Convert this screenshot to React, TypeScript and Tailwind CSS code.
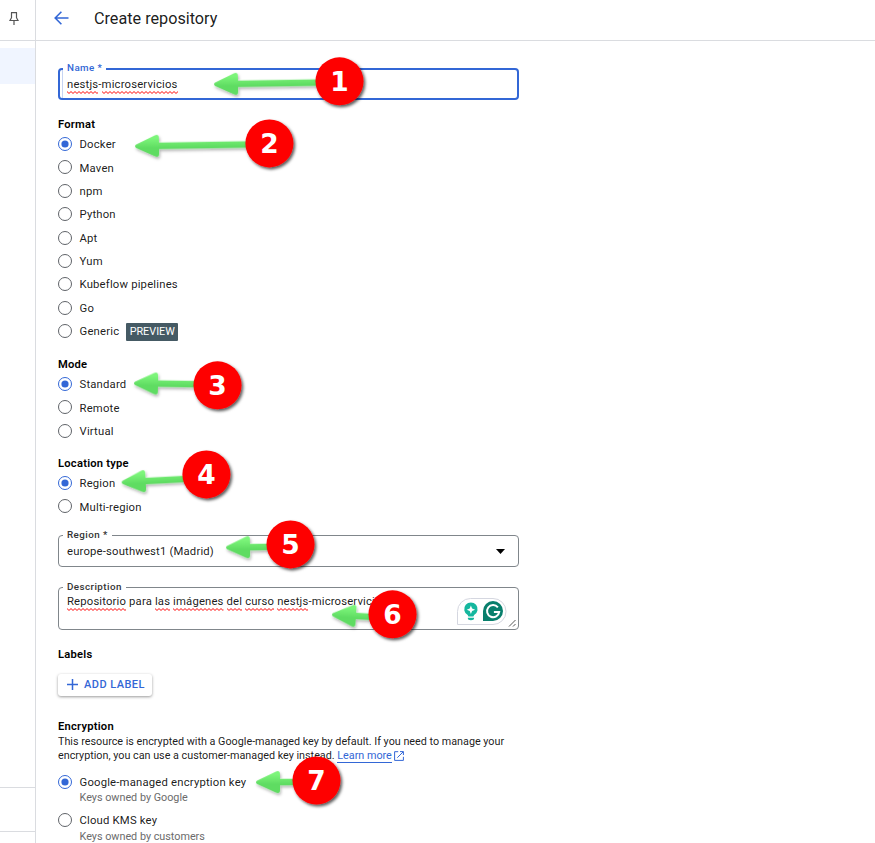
import React from "react";

type Marker = { n: number; x: number; y: number; tx: number; ty: number };

const markers: Marker[] = [
  { n: 1, x: 339.5, y: 81.3, tx: 214, ty: 84.2 },
  { n: 2, x: 269.4, y: 143.4, tx: 135, ty: 146.2 },
  { n: 3, x: 217.5, y: 385.3, tx: 134, ty: 383.2 },
  { n: 4, x: 206.4, y: 474.4, tx: 121.7, ty: 482.3 },
  { n: 5, x: 290.5, y: 544.4, tx: 226, ty: 547.5 },
  { n: 6, x: 392.5, y: 614.3, tx: 332, ty: 614.5 },
  { n: 7, x: 316.5, y: 780.5, tx: 256, ty: 782.2 },
];

// Direction of each arrow's shaft, in degrees
const angles = [-0.9, -0.9, 0.9, -3, -0.8, 3.5, -0.3];

function Radio({ on }: { on?: boolean }) {
  return (
    <svg className="h-[14px] w-[14px] shrink-0" viewBox="0 0 14 14">
      <circle cx="7" cy="7" r="6.5" fill="none" stroke={on ? "#3367d6" : "#5f6368"} strokeWidth="1" />
      {on && <circle cx="7" cy="7" r="3.6" fill="#3367d6" />}
    </svg>
  );
}

function Option({ label, on, badge }: { label: string; on?: boolean; badge?: string }) {
  return (
    <div className="flex h-[23.4px] items-center">
      <Radio on={on} />
      <span className="ml-[7.5px] pt-[1.1px] leading-[17px] tracking-[0.19px] whitespace-nowrap">{label}</span>
      {badge && (
        <span className="mt-[1px] ml-[7px] flex h-[18px] w-[52px] items-center justify-center rounded-[1px] bg-[#455a64] text-[10.8px] tracking-normal text-white">
          {badge}
        </span>
      )}
    </div>
  );
}

function Group({ title, className, children }: { title: string; className: string; children?: React.ReactNode }) {
  return (
    <section className={className}>
      <h2 className="h-[15.4px] text-[11.2px] leading-[15px] font-semibold tracking-[0.23px] text-black">{title}</h2>
      {children}
    </section>
  );
}

function Field({ label, className, labelClass, children }: { label: string; className: string; labelClass: string; children: React.ReactNode }) {
  return (
    <div className={`relative w-[461px] rounded-[4px] ${className}`}>
      <span className={`absolute h-[12px] bg-white px-[4px] text-[9.8px] leading-[12px] font-medium tracking-[0.43px] whitespace-nowrap ${labelClass}`}>
        {label}
      </span>
      {children}
    </div>
  );
}

// A word with the spell checker's wavy line under it
function Sp({ children }: { children: string }) {
  return (
    <span className="relative inline-block leading-[14px]">
      {children}
      <svg className="absolute -bottom-[2px] left-0 h-[3px] w-full">
        <rect width="100%" height="3" fill="url(#wave)" />
      </svg>
    </span>
  );
}

export default function App() {
  return (
    <div className="relative flex h-[843px] w-[875px] overflow-hidden bg-white font-[Roboto,sans-serif] text-[11.3px] tracking-[0.17px] text-[#1a1a1a]">
      <aside className="flex w-[36px] shrink-0 flex-col border-r border-[#dadce0]">
        <div className="flex h-[41px] items-start border-b border-[#dadce0] pt-[11px] pl-[7px]">
          <svg className="h-[15px] w-[14px]" viewBox="0 0 14 15" fill="none" stroke="#555" strokeWidth="1.2">
            <path d="M4 1.600h6M4.500 1.500v5.200L3 9.500h8L9.500 6.700V1.500M7 9.600V14" />
          </svg>
        </div>
        <div className="mt-[7px] h-[36px] bg-[#f0f5ff]" />
        <div className="mt-auto h-[56px] border-t border-[#dadce0]">
          <div className="h-[44px] border-b border-[#dadce0]" />
        </div>
      </aside>

      <main className="min-w-0 flex-1 text-black/90">
        <header className="flex h-[41px] items-center border-b border-[#dadce0] pb-[4px] pl-[18px]">
          <svg className="h-[14px] w-[15px]" viewBox="0 0 15 14" fill="none" stroke="#3367d6" strokeWidth="1.6">
            <path d="M14.500 7H1.600M7.400 0.700L1.200 7l6.200 6.300" />
          </svg>
          <h1 className="mt-[2px] ml-[25px] text-[16.2px] leading-[20px] tracking-normal">Create repository</h1>
        </header>

        <div className="pt-[27px] pl-[22px]">
          <Field label="Name *" className="h-[32px] border-2 border-[#3367d6]" labelClass="left-[3px] -top-[8px] text-[#3367d6]">
            <div className="ml-[2px] h-[28px] border-l border-[#c6d4f3] pl-[4px] leading-[29px]">
              <Sp>nestjs</Sp>-<Sp>microservicios</Sp>
            </div>
          </Field>

          <Group title="Format" className="h-[240px] pt-[17px]">
            <Option label="Docker" on />
            <Option label="Maven" />
            <Option label="npm" />
            <Option label="Python" />
            <Option label="Apt" />
            <Option label="Yum" />
            <Option label="Kubeflow pipelines" />
            <Option label="Go" />
            <Option label="Generic" badge="PREVIEW" />
          </Group>

          <Group title="Mode" className="h-[99px] pt-[17px]">
            <Option label="Standard" on />
            <Option label="Remote" />
            <Option label="Virtual" />
          </Group>

          <Group title="Location type" className="h-[96px] pt-[17px]">
            <Option label="Region" on />
            <Option label="Multi-region" />
          </Group>

          <Field label="Region *" className="h-[32px] border border-[#80868b]" labelClass="left-[4px] -top-[7px] text-[#333]">
            <div className="flex h-[30px] items-center justify-between pr-[13px] pl-[8px]">
              <span className="pt-[2px]">europe-southwest1 (Madrid)</span>
              <svg className="h-[5px] w-[9px]" viewBox="0 0 9 5">
                <path d="M0 0h9L4.500 5z" fill="#000" />
              </svg>
            </div>
          </Field>

          <Field label="Description" className="mt-[20px] h-[43px] border border-[#80868b]" labelClass="left-[4px] -top-[7px] text-[#333]">
            <div className="flex justify-between">
              <p className="pt-[6px] pl-[8px] leading-[16px] tracking-[0.16px] whitespace-nowrap">
                <Sp>Repositorio</Sp> para <Sp>las</Sp> <Sp>imágenes</Sp> <Sp>del</Sp> <Sp>curso</Sp> <Sp>nestjs</Sp>-microservicios
              </p>
              <svg className="h-[41px] w-[63px] shrink-0" viewBox="455 588 63 41">
                <path d="M457.500 624.500V611.500a13 13 0 0 1 13-13h22.500a13 13 0 0 1 0 26z" fill="#fff" stroke="#d5d7e0" />
                <path d="M467.700 615a6.700 6.700 0 1 1 6.400 0l-.7 1.500h-5z" fill="#15b79e" />
                <path d="M467.800 617.800h6.300v.3a3.150 2.200 0 0 1-6.300 0z" fill="#15b79e" />
                <path d="M470.900 605.500l1.200 3 3 1.200-3 1.200-1.200 3-1.200-3-3-1.200 3-1.200z" fill="#fff" />
                <path d="M483 621V611a10 10 0 1 1 10 10z" fill="#087f6c" />
                <path d="M497.900 607.300a6.100 6.100 0 1 0 1.300 4.600h-5.300" fill="none" stroke="#fff" strokeWidth="2" />
                <path d="M509 626.500l6.500-6.500M513 626.500l2.500-2.500" stroke="#444" strokeWidth=".9" />
              </svg>
            </div>
          </Field>

          <Group title="Labels" className="h-[66px] pt-[17px]">
            <button className="mt-[11.600px] flex h-[22px] w-[94px] items-center rounded-[3px] bg-white pl-[9px] font-medium text-[#3367d6] shadow-[0_1px_3px_rgba(0,0,0,0.4)]">
              <svg className="mb-[1px] h-[11px] w-[11px]" viewBox="0 0 11 11" stroke="#3367d6" strokeWidth="1.5">
                <path d="M5.500 0v11M0 5.500h11" />
              </svg>
              <span className="ml-[6px] text-[11px] tracking-[0.45px] whitespace-nowrap">ADD LABEL</span>
            </button>
          </Group>

          <Group title="Encryption" className="pt-[23px]">
            <p className="pt-[0.600px] text-[10.8px] leading-[14.400px] tracking-[-0.010px] whitespace-nowrap">
              This resource is encrypted with a Google-managed key by default. If you need to manage your
              <br />
              encryption, you can use a customer-managed key instead.{" "}
              <a className="border-b border-[#3367d6] text-[#3367d6]">Learn more</a>
              <svg className="ml-[2px] inline h-[10px] w-[10px] align-[-1.500px]" viewBox="0 0 10 10" fill="none" stroke="#3367d6">
                <path d="M4.200.7H.6v8.700h8.800V5.800M6 .6h3.400V4M9.200.8L3.300 6.700" />
              </svg>
            </p>
            <div className="mt-[6.700px]">
              <Option label="Google-managed encryption key" on />
              <p className="-mt-[3px] h-[14px] pl-[21.500px] text-[10.800px] leading-[14px] tracking-[0px] text-[#6b6b6b]">Keys owned by Google</p>
            </div>
            <div className="mt-[3.400px]">
              <Option label="Cloud KMS key" />
              <p className="-mt-[3px] h-[14px] pl-[21.500px] text-[10.800px] leading-[15px] tracking-[0px] text-[#6b6b6b]">Keys owned by customers</p>
            </div>
          </Group>
        </div>
      </main>

      {/* Numbered callouts lie over the form */}
      <svg className="pointer-events-none absolute inset-0 h-[843px] w-[875px]" viewBox="0 0 875 843">
        <defs>
          <pattern id="wave" width="4" height="3" patternUnits="userSpaceOnUse">
            <path d="M-1 1.500L0 .5L2 2.500L4 .5L5 1.500" fill="none" stroke="#f00" strokeWidth="1" />
          </pattern>
          <linearGradient id="shaft" x1="0" y1="0" x2="0" y2="1">
            <stop offset="0.150" stopColor="#7cf57a" />
            <stop offset="0.600" stopColor="#5fdc62" />
          </linearGradient>
          <filter id="soft" x="-20%" y="-60%" width="140%" height="240%">
            <feDropShadow dx="1" dy="2" stdDeviation="1.5" floodColor="#000" floodOpacity="0.3" />
          </filter>
          <filter id="disc" x="-30%" y="-30%" width="170%" height="170%">
            <feDropShadow dx="1.700" dy="2" stdDeviation="1.6" floodColor="#000" floodOpacity="0.65" />
          </filter>
        </defs>
        {markers.map((m, i) => (
          <g key={m.n}>
            <path
              filter="url(#soft)"
              fill="url(#shaft)"
              transform={`translate(${m.tx} ${m.ty}) rotate(${angles[i]})`}
              d={`M1 -1.500L20 -10.600Q24 -12 24 -8V-3.200H${m.x - m.tx}V3.200H24V8Q24 12 20 10.600L1 1.800Q-1 0 1 -1.500Z`}
            />
            <circle cx={m.x} cy={m.y} r="24" fill="#fe0000" filter="url(#disc)" />
            <text x={m.x} y={m.y + 9.600} textAnchor="middle" fill="#fff" className="font-['DejaVu_Sans'] text-[26.500px] font-bold tracking-normal">
              {m.n}
            </text>
          </g>
        ))}
      </svg>
    </div>
  );
}
